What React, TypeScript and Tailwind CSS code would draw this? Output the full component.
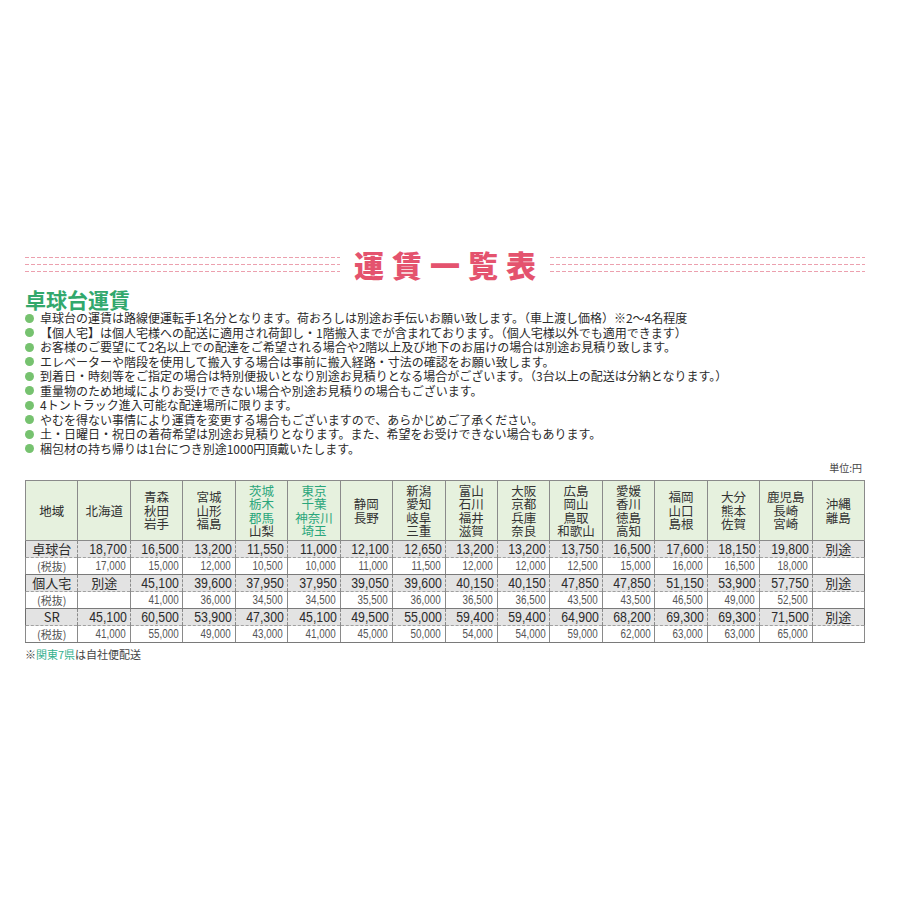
import React from 'react';

type Region = { lines: string[]; green?: number };

const regions: Region[] = [
  { lines: ['北海道'] },
  { lines: ['青森', '秋田', '岩手'] },
  { lines: ['宮城', '山形', '福島'] },
  { lines: ['茨城', '栃木', '郡馬', '山梨'], green: 3 },
  { lines: ['東京', '千葉', '神奈川', '埼玉'], green: 4 },
  { lines: ['静岡', '長野'] },
  { lines: ['新潟', '愛知', '岐阜', '三重'] },
  { lines: ['富山', '石川', '福井', '滋賀'] },
  { lines: ['大阪', '京都', '兵庫', '奈良'] },
  { lines: ['広島', '岡山', '鳥取', '和歌山'] },
  { lines: ['愛媛', '香川', '徳島', '高知'] },
  { lines: ['福岡', '山口', '島根'] },
  { lines: ['大分', '熊本', '佐賀'] },
  { lines: ['鹿児島', '長崎', '宮崎'] },
  { lines: ['沖縄', '離島'] },
];

const rows = [
  {
    label: '卓球台',
    main: ['18,700', '16,500', '13,200', '11,550', '11,000', '12,100', '12,650', '13,200', '13,200', '13,750', '16,500', '17,600', '18,150', '19,800', '別途'],
    sub: ['17,000', '15,000', '12,000', '10,500', '10,000', '11,000', '11,500', '12,000', '12,000', '12,500', '15,000', '16,000', '16,500', '18,000', ''],
  },
  {
    label: '個人宅',
    main: ['別途', '45,100', '39,600', '37,950', '37,950', '39,050', '39,600', '40,150', '40,150', '47,850', '47,850', '51,150', '53,900', '57,750', '別途'],
    sub: ['', '41,000', '36,000', '34,500', '34,500', '35,500', '36,000', '36,500', '36,500', '43,500', '43,500', '46,500', '49,000', '52,500', ''],
  },
  {
    label: 'SR',
    main: ['45,100', '60,500', '53,900', '47,300', '45,100', '49,500', '55,000', '59,400', '59,400', '64,900', '68,200', '69,300', '69,300', '71,500', '別途'],
    sub: ['41,000', '55,000', '49,000', '43,000', '41,000', '45,000', '50,000', '54,000', '54,000', '59,000', '62,000', '63,000', '63,000', '65,000', ''],
  },
];

const notes = [
  '卓球台の運賃は路線便運転手1名分となります。荷おろしは別途お手伝いお願い致します。（車上渡し価格）※2～4名程度',
  '【個人宅】は個人宅様への配送に適用され荷卸し・1階搬入までが含まれております。（個人宅様以外でも適用できます）',
  'お客様のご要望にて2名以上での配達をご希望される場合や2階以上及び地下のお届けの場合は別途お見積り致します。',
  'エレベーターや階段を使用して搬入する場合は事前に搬入経路・寸法の確認をお願い致します。',
  '到着日・時刻等をご指定の場合は特別便扱いとなり別途お見積りとなる場合がございます。（3台以上の配送は分納となります。）',
  '重量物のため地域によりお受けできない場合や別途お見積りの場合もございます。',
  '4トントラック進入可能な配達場所に限ります。',
  'やむを得ない事情により運賃を変更する場合もございますので、あらかじめご了承ください。',
  '土・日曜日・祝日の着荷希望は別途お見積りとなります。また、希望をお受けできない場合もあります。',
  '梱包材の持ち帰りは1台につき別途1000円頂戴いたします。',
];

const jp = "font-['Noto_Sans_CJK_JP','Noto_Sans',sans-serif]";
const num = "font-['Liberation_Sans',sans-serif]";

// 3本の点線（タイトル左右）
const Dashes = () => (
  <div className="flex-1 flex flex-col gap-[6px]">
    <div className="h-px bg-[repeating-linear-gradient(90deg,#eca0ae_0px,#eca0ae_4px,transparent_4px,transparent_6px)]" />
    <div className="h-px bg-[repeating-linear-gradient(90deg,#eca0ae_0px,#eca0ae_4px,transparent_4px,transparent_6px)]" />
    <div className="h-px bg-[repeating-linear-gradient(90deg,#eca0ae_0px,#eca0ae_4px,transparent_4px,transparent_6px)]" />
  </div>
);

const App: React.FC = () => {
  return (
    <div className={`w-[900px] h-[900px] bg-white text-[#2b2b2b] ${jp}`}>
      <div className="ml-[25px] w-[840px] pt-[248px]">
        {/* タイトル */}
        <div className="flex items-center h-[32px]">
          <Dashes />
          <h1 className="ml-[14px] mr-[6px] text-[30px] leading-[32px] font-black tracking-[8px] text-[#e4536e]">
            運賃一覧表
          </h1>
          <Dashes />
        </div>

        <h2 className="mt-[7px] text-[21px] leading-[24px] font-bold text-[#32a86c]">卓球台運賃</h2>

        <ul>
          {notes.map((n) => (
            <li key={n} className="flex items-center h-[14.5px] text-[12px] leading-[14.5px] whitespace-nowrap">
              <span className="w-[9px] h-[9px] rounded-full bg-[#76c26f] mr-[6px] shrink-0" />
              <span>{n}</span>
            </li>
          ))}
        </ul>

        <div className="mt-[6px] text-right text-[10px] leading-[12px] pr-[3px] text-[#444]">単位:円</div>

        <table className="mt-[6px] w-full table-fixed border-collapse border border-[#6e6e6e]">
          <thead>
            <tr className="h-[60px] bg-[#e6f1de]">
              <td className="border border-[#8a8a8a] text-center align-middle text-[12.5px] leading-[13.5px]">地域</td>
              {regions.map((r, i) => (
                <td key={i} className="border border-[#8a8a8a] text-center align-middle text-[12.5px] leading-[13.5px] p-0">
                  {r.lines.map((l, j) => (
                    <div key={l} className={r.green && j < r.green ? 'text-[#2aa67b]' : 'text-[#333]'}>
                      {l}
                    </div>
                  ))}
                </td>
              ))}
            </tr>
          </thead>
          <tbody>
            {rows.map((row) => (
              <React.Fragment key={row.label}>
                <tr className="h-[17px] bg-[#e3e3e3]">
                  <td className="border-x border-x-[#8a8a8a] border-b border-dashed border-b-[#a0a0a0] text-center text-[13px] leading-[16px] p-0">
                    {row.label}
                  </td>
                  {row.main.map((v, i) => (
                    <td
                      key={i}
                      className={
                        v === '別途'
                          ? 'border-x border-x-[#8a8a8a] border-b border-b-[#a0a0a0] border-dashed text-center text-[13px] leading-[16px] p-0'
                          : `border-x border-x-[#8a8a8a] border-b border-b-[#a0a0a0] border-dashed text-right pr-[3px] text-[15px] leading-[16px] p-0 ${num}`
                      }
                    >
                      {v === '別途' ? v : <span className="inline-block origin-right scale-x-[0.82]">{v}</span>}
                    </td>
                  ))}
                </tr>
                <tr className="h-[17px] bg-white">
                  <td className="border-x border-x-[#8a8a8a] border-b border-b-[#7a7a7a] text-center text-[11px] leading-[16px] text-[#555] p-0">
                    (税抜)
                  </td>
                  {row.sub.map((v, i) => (
                    <td
                      key={i}
                      className={`border-x border-x-[#8a8a8a] border-b border-b-[#7a7a7a] text-right pr-[4px] text-[12px] leading-[16px] text-[#555] p-0 ${num}`}
                    >
                      <span className="inline-block origin-right scale-x-[0.82]">{v}</span>
                    </td>
                  ))}
                </tr>
              </React.Fragment>
            ))}
          </tbody>
        </table>

        <div className="mt-[4px] text-[11px] leading-[14px] text-[#444]">
          ※<span className="text-[#35b08e]">関東7県</span>は自社便配送
        </div>
      </div>
    </div>
  );
};

export default App;
